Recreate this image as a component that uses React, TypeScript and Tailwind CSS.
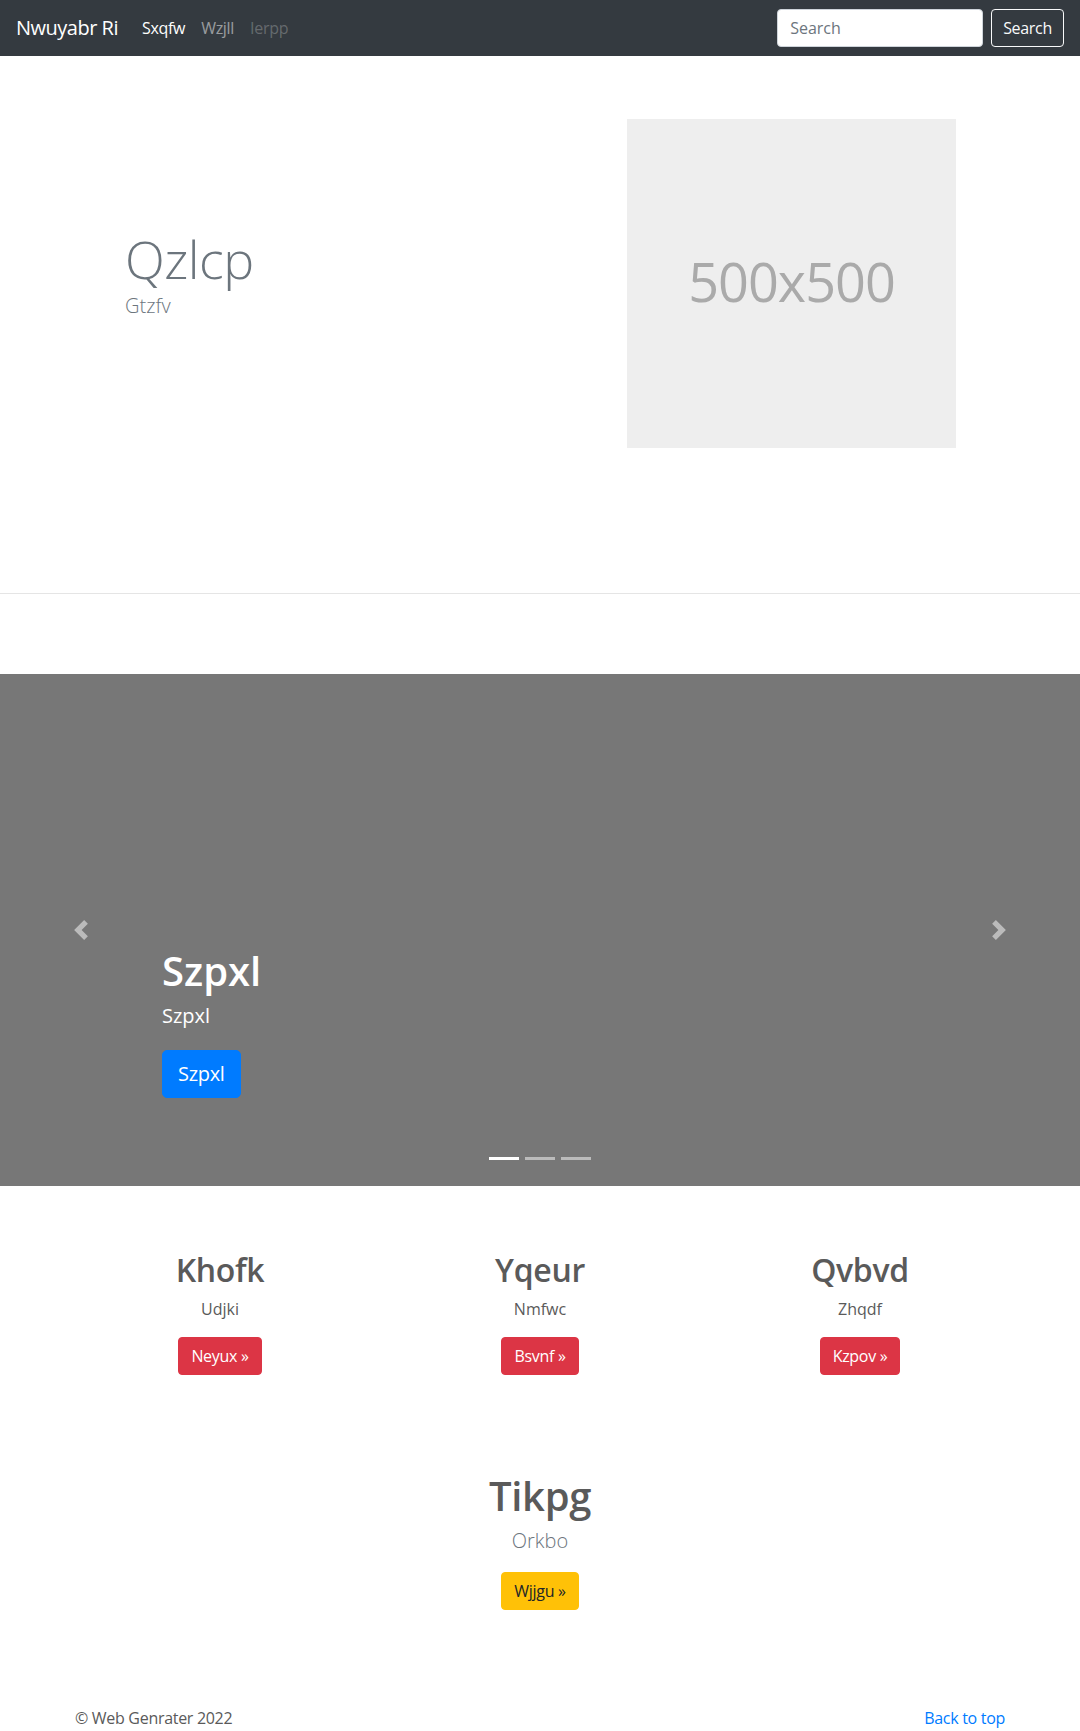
import React from 'react';

const ChevronLeft = () => (
  <svg viewBox="0 0 8 8" className="w-5 h-5" fill="#fff">
    <path d="M5.25 0l-4 4 4 4 1.5-1.5L4.25 4l2.5-2.5L5.25 0z" />
  </svg>
);

const ChevronRight = () => (
  <svg viewBox="0 0 8 8" className="w-5 h-5" fill="#fff">
    <path d="M2.75 0l-1.5 1.5L3.75 4l-2.5 2.5L2.75 8l4-4-4-4z" />
  </svg>
);

const features = [
  { title: 'Khofk', text: 'Udjki', btn: 'Neyux' },
  { title: 'Yqeur', text: 'Nmfwc', btn: 'Bsvnf' },
  { title: 'Qvbvd', text: 'Zhqdf', btn: 'Kzpov' },
];

const App: React.FC = () => {
  return (
    <div className="min-h-screen bg-white text-[#5a5a5a] font-['Open_Sans','Noto_Sans',sans-serif] text-base leading-6">
      {/* Navbar */}
      <nav className="h-[56px] bg-[#343a40] flex items-center justify-between px-4">
        <div className="flex items-center">
          <a href="#" className="text-[20px] text-white mr-4 leading-[30px] tracking-[-0.5px]">Nwuyabr Ri</a>
          <ul className="flex items-center tracking-[-0.3px]">
            <li><a href="#" className="block px-2 text-white">Sxqfw</a></li>
            <li><a href="#" className="block px-2 text-white/50">Wzjll</a></li>
            <li><span className="block px-2 text-white/25">Ierpp</span></li>
          </ul>
        </div>
        <form className="flex items-center" onSubmit={(e) => e.preventDefault()}>
          <input
            type="text"
            placeholder="Search"
            className="w-[206px] h-[38px] mr-2 px-3 rounded border border-[#ced4da] bg-white text-[#495057] placeholder:text-[#6c757d] outline-none"
          />
          <button type="submit" className="h-[38px] px-[11px] rounded border border-[#f8f9fa] text-[#f8f9fa] tracking-[-0.3px]">
            Search
          </button>
        </form>
      </nav>

      {/* Hero */}
      <section className="border-b border-[#e5e5e5]">
        <div className="w-[960px] mx-auto px-[15px] pt-[63px] pb-[145px] flex items-center">
          <div className="w-[465px] pl-[50px] mb-[20px]">
            <h1 className="text-[52px] font-light leading-[64px] text-[#6c757d] tracking-[-0.5px]">Qzlcp</h1>
            <p className="text-[20px] font-light leading-[30px] text-[#6c757d]">Gtzfv</p>
          </div>
          <div className="pl-[87px]">
            <div className="w-[329px] h-[329px] bg-[#eeeeee] flex items-center justify-center">
              <span className="text-[54px] text-[#aaaaaa] tracking-[-1px] mb-[6px]">500x500</span>
            </div>
          </div>
        </div>
      </section>

      {/* Carousel */}
      <section className="mt-[80px] relative h-[512px] bg-[#777777] overflow-hidden">
        <a href="#" className="absolute left-0 top-0 h-full w-[15%] flex items-center justify-center opacity-50">
          <ChevronLeft />
        </a>
        <a href="#" className="absolute right-0 top-0 h-full w-[15%] flex items-center justify-center opacity-50">
          <ChevronRight />
        </a>
        <div className="absolute left-[15%] right-[15%] bottom-[88px] text-left text-white">
          <h1 className="text-[40px] font-semibold leading-[48px] mb-[6px]">Szpxl</h1>
          <p className="text-[20px] leading-[30px] mb-[19px]">Szpxl</p>
          <a href="#" className="inline-block h-[48px] px-[15px] leading-[46px] text-[20px] rounded-[5px] bg-[#007bff] border border-[#007bff] text-white tracking-[-0.3px]">
            Szpxl
          </a>
        </div>
        <ol className="absolute left-0 right-0 bottom-[26px] flex justify-center gap-[6px]">
          <li className="w-[30px] h-[3px] bg-white"></li>
          <li className="w-[30px] h-[3px] bg-white/50"></li>
          <li className="w-[30px] h-[3px] bg-white/50"></li>
        </ol>
      </section>

      {/* Marketing */}
      <section className="w-[960px] mx-auto px-[15px] mt-[65px]">
        <div className="grid grid-cols-3 -mx-[15px]">
          {features.map((f) => (
            <div key={f.title} className="px-[15px] text-center">
              <h2 className="text-[32px] font-[550] leading-[38px] mb-2 tracking-[-0.3px]">{f.title}</h2>
              <p className="mb-4">{f.text}</p>
              <a href="#" className="inline-block h-[38px] px-3 leading-[36px] rounded border border-[#dc3545] bg-[#dc3545] text-white tracking-[-0.3px]">
                {f.btn} &raquo;
              </a>
            </div>
          ))}
        </div>

        <div className="mt-[97px] text-center">
          <h1 className="text-[40px] font-[550] leading-[48px] mb-[6px] tracking-[-0.3px]">Tikpg</h1>
          <p className="text-[20px] font-light leading-[30px] text-[#6c757d] mb-4">Orkbo</p>
          <a href="#" className="inline-block h-[38px] px-3 leading-[36px] rounded border border-[#ffc107] bg-[#ffc107] text-[#212529] tracking-[-0.3px]">
            Wjjgu &raquo;
          </a>
        </div>
      </section>

      {/* Footer */}
      <footer className="w-[960px] mx-auto px-[15px] pt-[96px] pb-8 flex justify-between tracking-[-0.3px]">
        <p>&copy; Web Genrater 2022</p>
        <a href="#" className="text-[#007bff]">Back to top</a>
      </footer>
    </div>
  );
};

export default App;
